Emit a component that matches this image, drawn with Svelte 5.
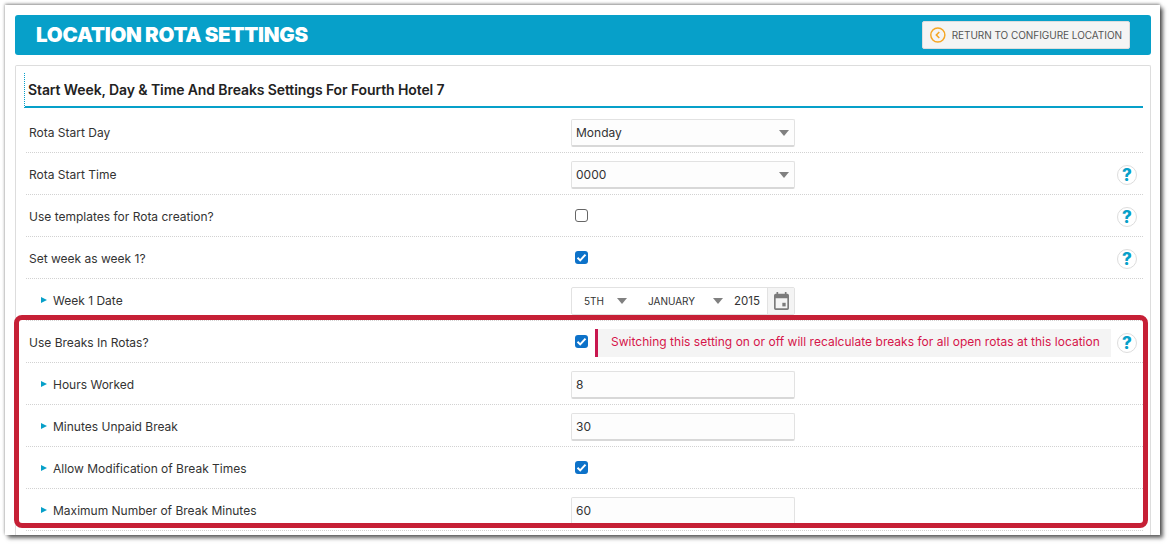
<script>
	const help = true;
</script>

<main class="window">
	<header class="topbar">
		<h1>LOCATION ROTA SETTINGS</h1>
		<button class="back">
			<svg width="16" height="16" viewBox="0 0 16 16"><circle cx="8" cy="8" r="7.2" fill="none" stroke="#f5a623" stroke-width="1.5"/><path d="M9.5 5 L6.5 8 L9.5 11" fill="none" stroke="#f5a623" stroke-width="1.6"/></svg>
			RETURN TO CONFIGURE LOCATION
		</button>
	</header>

	<section class="panel">
		<h2><span>Start Week, Day &amp; Time And Breaks Settings For Fourth Hotel 7</span></h2>

		<div class="row">
			<div class="label">Rota Start Day</div>
			<div class="control"><div class="select">Monday<i class="arrow"></i></div></div>
		</div>
		<div class="row">
			<div class="label">Rota Start Time</div>
			<div class="control"><div class="select">0000<i class="arrow"></i></div></div>
			{#if help}<div class="help">?</div>{/if}
		</div>
		<div class="row">
			<div class="label">Use templates for Rota creation?</div>
			<div class="control"><span class="check"></span></div>
			<div class="help">?</div>
		</div>
		<div class="row">
			<div class="label">Set week as week 1?</div>
			<div class="control"><span class="check on"><svg width="13" height="13" viewBox="0 0 13 13"><path d="M2.5 6.8 L5.2 9.4 L10.5 3.6" fill="none" stroke="#fff" stroke-width="2"/></svg></span></div>
			<div class="help">?</div>
		</div>
		<div class="row">
			<div class="label sub">Week 1 Date</div>
			<div class="control">
				<div class="date">
					<span class="d-day">5TH<i class="arrow"></i></span>
					<span class="d-month">JANUARY<i class="arrow"></i></span>
					<span class="d-year">2015</span>
					<span class="d-cal">
						<svg width="15" height="18" viewBox="0 0 18 20" preserveAspectRatio="none"><path fill="#7b7b7b" d="M3 0h2v2h8V0h2v2h1a2 2 0 0 1 2 2v14a2 2 0 0 1-2 2H2a2 2 0 0 1-2-2V4a2 2 0 0 1 2-2h1zM2 7v11h14V7z"/><rect x="10" y="12" width="4" height="4" fill="#7b7b7b"/></svg>
					</span>
				</div>
			</div>
		</div>
		<div class="row">
			<div class="label">Use Breaks In Rotas?</div>
			<div class="control wide">
				<span class="check on"><svg width="13" height="13" viewBox="0 0 13 13"><path d="M2.5 6.8 L5.2 9.4 L10.5 3.6" fill="none" stroke="#fff" stroke-width="2"/></svg></span>
				<div class="warning">Switching this setting on or off will recalculate breaks for all open rotas at this location</div>
			</div>
			<div class="help">?</div>
		</div>
		<div class="row">
			<div class="label sub">Hours Worked</div>
			<div class="control"><div class="input">8</div></div>
		</div>
		<div class="row">
			<div class="label sub">Minutes Unpaid Break</div>
			<div class="control"><div class="input">30</div></div>
		</div>
		<div class="row">
			<div class="label sub">Allow Modification of Break Times</div>
			<div class="control"><span class="check on"><svg width="13" height="13" viewBox="0 0 13 13"><path d="M2.5 6.8 L5.2 9.4 L10.5 3.6" fill="none" stroke="#fff" stroke-width="2"/></svg></span></div>
		</div>
		<div class="row">
			<div class="label sub">Maximum Number of Break Minutes</div>
			<div class="control"><div class="input">60</div></div>
		</div>
	</section>

	<div class="highlight"></div>
</main>

<style>
	:global(body) {
		background: #fff;
		min-height: 544px;
		font-family: Inter, "Liberation Sans", sans-serif;
	}

	.window {
		position: relative;
		box-sizing: border-box;
		width: 1155px;
		height: 530px;
		margin: 5px 0 0 5px;
		padding: 10px 9px 0 10px;
		background: #fff;
		box-shadow: 3px 3px 4px rgba(0, 0, 0, 0.6), 0 -1px 3px rgba(0, 0, 0, 0.45);
		overflow: hidden;
	}

	.topbar {
		display: flex;
		align-items: center;
		justify-content: space-between;
		height: 40px;
		padding: 0 21px;
		background: #07a0c9;
		border-radius: 3px;
	}

	h1 {
		margin: 0 0 2px;
		font-size: 20.5px;
		font-weight: 900;
		letter-spacing: -0.25px;
		word-spacing: -0.5px;
		color: #fff;
	}

	.back {
		display: flex;
		align-items: center;
		gap: 6px;
		box-sizing: border-box;
		height: 28px;
		width: 208px;
		padding: 0 7px;
		background: #f4f4f4;
		border: 1px solid #ddd;
		border-radius: 2px;
		font: 400 10px Inter, sans-serif;
		letter-spacing: -0.04px;
		color: #555;
		white-space: nowrap;
	}

	.panel {
		box-sizing: border-box;
		height: 480px;
		margin-top: 10px;
		padding: 7px 7px 0 8px;
		border: 1px solid #ddd;
		border-bottom: 0;
		border-radius: 2px 2px 0 0;
	}

	h2 {
		display: flex;
		align-items: center;
		box-sizing: border-box;
		height: 35px;
		margin: 0 0 3px;
		padding-left: 3px;
		border-bottom: 2px solid #07a0c9;
		border-left: 1px dotted #07a0c9;
		font-size: 14px;
		font-weight: 600;
		letter-spacing: -0.1px;
		color: #222;
	}

	.row {
		display: flex;
		align-items: center;
		box-sizing: border-box;
		height: 42px;
		padding-top: 2px;
		margin: 0 0 0 2px;
		border-bottom: 1px dotted #d2d2d2;
		position: relative;
	}

	.label {
		width: 542px;
		padding-left: 3px;
		flex: none;
		font-size: 12px;
		color: #333;
	}

	.label.sub {
		padding-left: 27px;
		width: 518px;
		position: relative;
	}

	.label.sub::before {
		content: "";
		position: absolute;
		left: 15px;
		top: 4px;
		border-left: 6px solid #07a0c9;
		border-top: 3.5px solid transparent;
		border-bottom: 3.5px solid transparent;
	}

	.control {
		display: flex;
		align-items: center;
		width: 224px;
		flex: none;
	}

	.control.wide {
		width: 540px;
	}

	.select, .input {
		position: relative;
		box-sizing: border-box;
		width: 224px;
		height: 28px;
		line-height: 25px;
		padding-left: 4px;
		background: #fdfdfd;
		border: 1px solid #e2e2e2;
		border-bottom: 2px solid #d8d8d8;
		border-radius: 2px;
		font-size: 12px;
		color: #333;
	}

	.arrow {
		display: inline-block;
		border-top: 6px solid #808080;
		border-left: 5px solid transparent;
		border-right: 5px solid transparent;
	}

	.select .arrow {
		position: absolute;
		right: 5px;
		top: 10px;
	}

	.check {
		box-sizing: border-box;
		display: flex;
		align-items: center;
		justify-content: center;
		width: 13px;
		height: 13px;
		margin: -2px 0 0 4px;
		border: 1px solid #666;
		border-radius: 3px;
		background: #fff;
	}

	.check.on {
		background: #0d72c9;
		border: 0;
	}

	.date {
		display: flex;
		align-items: center;
		box-sizing: border-box;
		width: 224px;
		height: 28px;
		border: 1px solid #e2e2e2;
		border-radius: 2px;
		font-size: 10px;
		color: #333;
	}

	.date span {
		display: flex;
		align-items: center;
	}

	.d-day {
		width: 72px;
		padding-left: 12px;
		box-sizing: border-box;
		gap: 13px;
		flex: none;
	}

	.d-month {
		width: 87px;
		padding-left: 4px;
		box-sizing: border-box;
		gap: 18px;
		flex: none;
	}

	.d-year {
		width: 36px;
		padding-left: 3px;
		box-sizing: border-box;
		font-size: 11.5px;
		flex: none;
	}

	.d-cal {
		flex: 1;
		height: 100%;
		justify-content: center;
		background: #f4f4f4;
		border-left: 1px solid #e2e2e2;
	}

	.warning {
		box-sizing: border-box;
		height: 28px;
		line-height: 26px;
		width: 516px;
		margin: 0 0 0 7px;
		padding-left: 13px;
		background: #f4f4f4;
		border-left: 3px solid #c8174f;
		font-size: 12px;
		letter-spacing: 0.02px;
		color: #d6154a;
		white-space: nowrap;
	}

	.help {
		position: absolute;
		right: 6px;
		top: 12px;
		box-sizing: border-box;
		width: 20px;
		height: 20px;
		line-height: 18px;
		text-align: center;
		border: 1px solid #ddd;
		border-radius: 50%;
		font-size: 17px;
		font-weight: 800;
		color: #07a0c9;
	}

	/* annotation drawn on top of the screenshot */
	.highlight {
		position: absolute;
		left: 9px;
		top: 310px;
		width: 1134px;
		height: 213px;
		box-sizing: border-box;
		border: 5px solid #c62036;
		border-radius: 8px;
	}
</style>
